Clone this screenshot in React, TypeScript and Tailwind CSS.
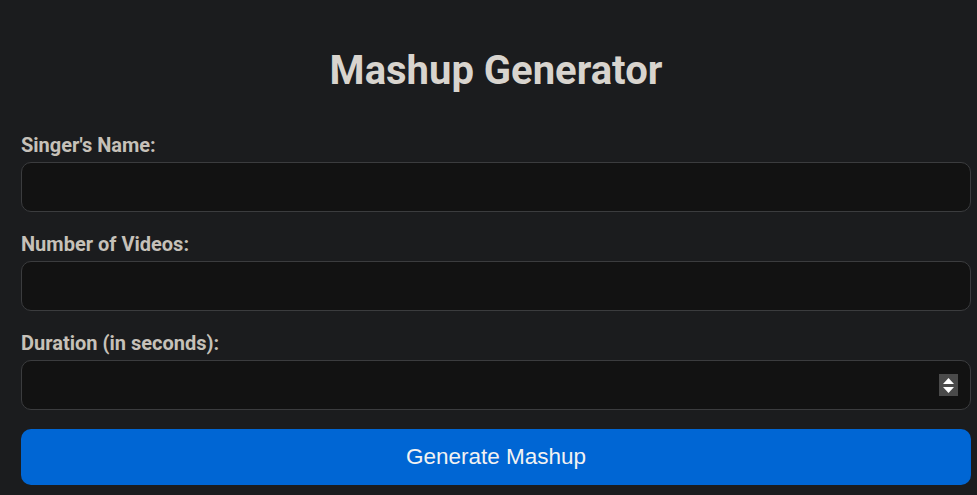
export default function App() {
  const fields = [
    { id: "singer", label: "Singer's Name:", spinner: false },
    { id: "videos", label: "Number of Videos:", spinner: false },
    { id: "duration", label: "Duration (in seconds):", spinner: true },
  ];

  return (
    <div className="min-h-[495px] w-full bg-[#1b1c1e] font-['Roboto',sans-serif]">
      <div className="ml-[21px] w-[950px] pt-[47px]">
        <h1 className="text-center text-[40px] leading-[48px] font-bold text-[#d8d4ce] mb-[38px]">
          Mashup Generator
        </h1>

        <form onSubmit={(e) => e.preventDefault()} className="flex flex-col">
          {fields.map((f) => (
            <div key={f.id} className="flex flex-col mb-[20px]">
              <label htmlFor={f.id} className="h-[24px] leading-[24px] text-[20px] font-bold text-[#c6c1b9] mb-[5px]">
                {f.label}
              </label>
              <div className="relative">
                <input
                  id={f.id}
                  type="text"
                  className="block w-full h-[50px] rounded-[10px] border border-[#3b3c3e] bg-[#121212] px-3 text-[#e5e5e5] outline-none"
                />
                {f.spinner && (
                  <div className="absolute right-[13px] top-[14px] w-[19px] h-[22px] bg-[#4a4a4a] flex flex-col items-center justify-center gap-[3px]">
                    <svg width="11" height="6" viewBox="0 0 11 6">
                      <path d="M5.5 0 L11 6 L0 6 Z" fill="#ffffff" />
                    </svg>
                    <svg width="11" height="6" viewBox="0 0 11 6">
                      <path d="M0 0 L11 0 L5.5 6 Z" fill="#ffffff" />
                    </svg>
                  </div>
                )}
              </div>
            </div>
          ))}

          <button
            type="submit"
            className="-mt-px h-[56px] w-full rounded-[10px] bg-[#0066d4] text-[22.5px] text-[#f2f2f2] font-['Liberation_Sans',Arial,sans-serif]"
          >
            Generate Mashup
          </button>
        </form>
      </div>
    </div>
  );
}
